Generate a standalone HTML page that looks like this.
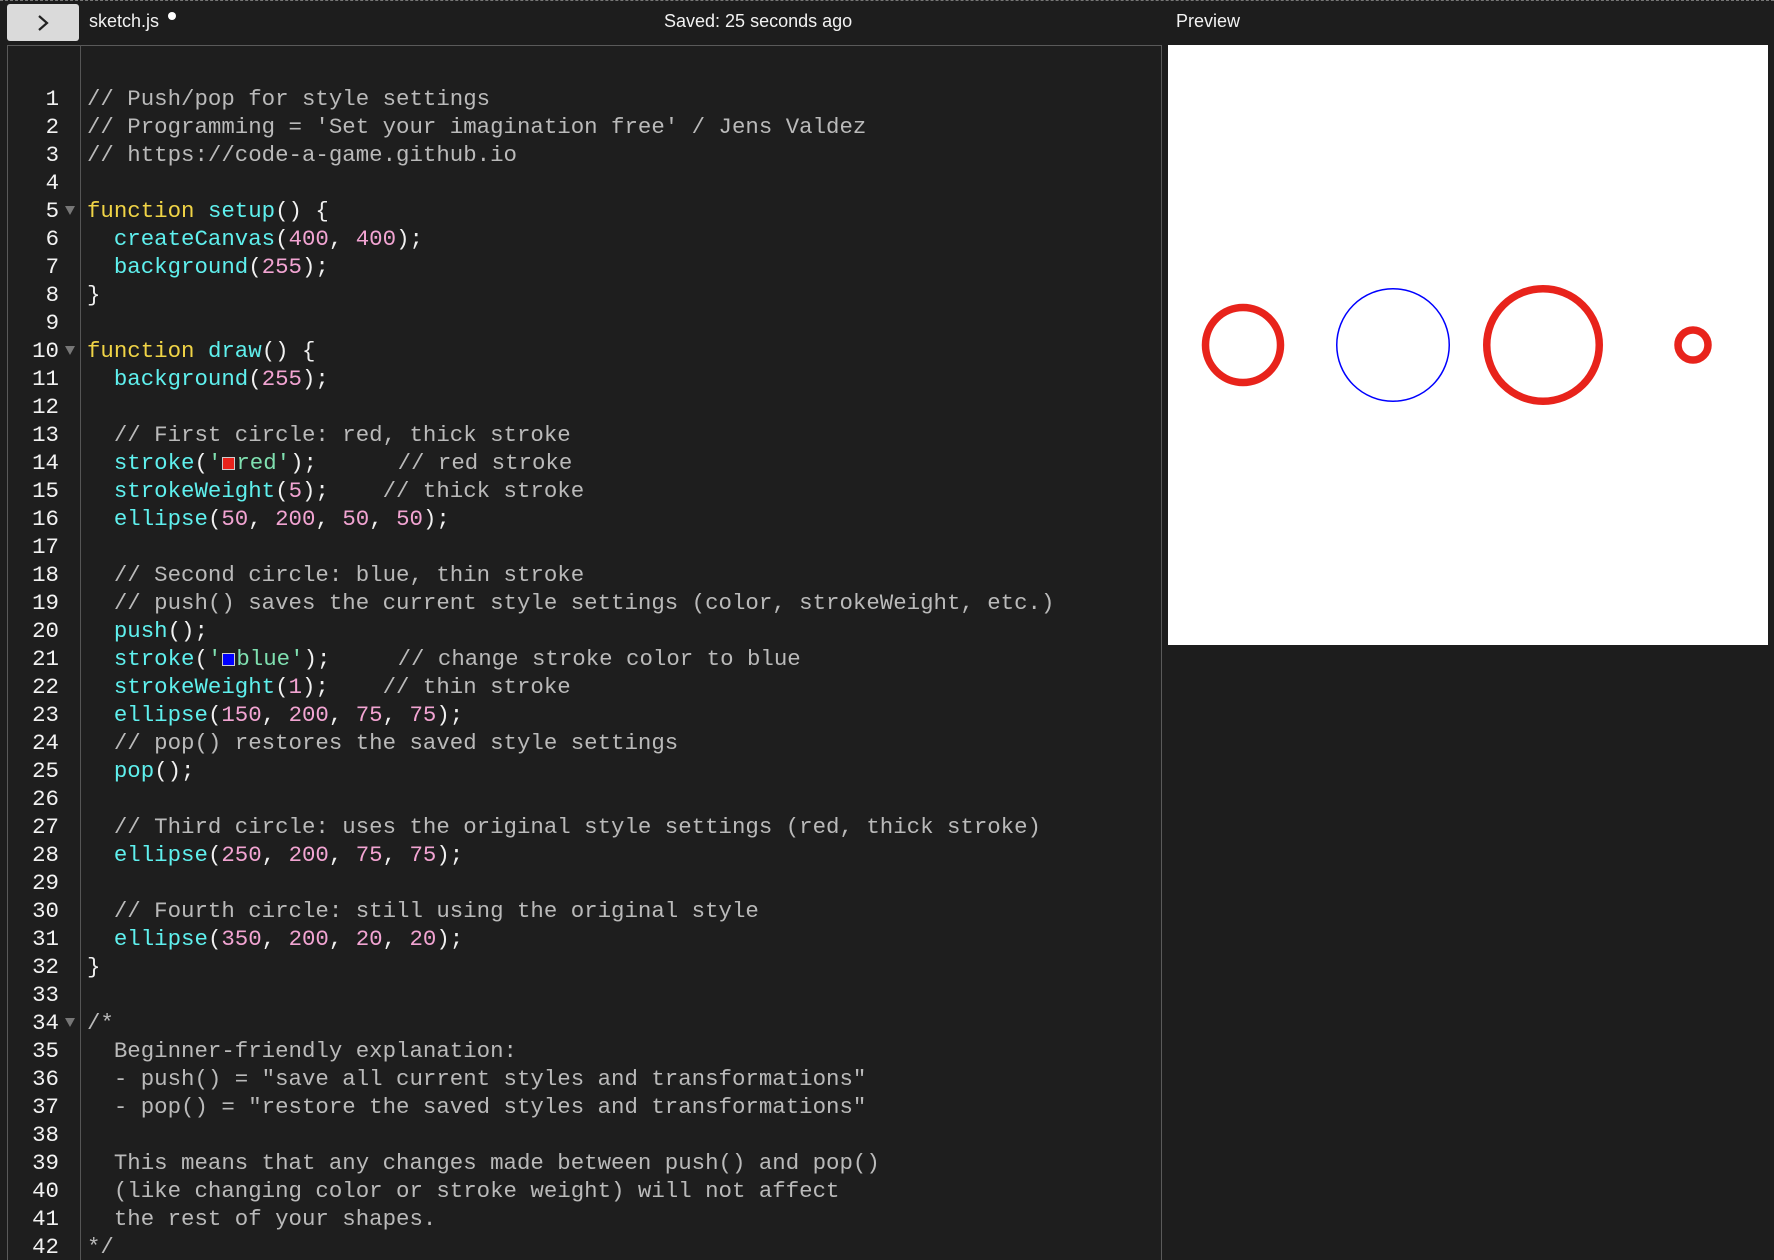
<!DOCTYPE html>
<html><head><meta charset="utf-8"><style>
*{margin:0;padding:0;box-sizing:border-box}
html,body{width:1774px;height:1260px;overflow:hidden}
body{background:#1d1d1d;position:relative;font-family:"Liberation Sans",sans-serif}
.topline{position:absolute;left:0;top:0;width:1774px;height:0;border-top:1px dashed #777}
.btn{position:absolute;left:7px;top:4px;width:72px;height:37px;background:#dadada;border-radius:3px}
.tab{position:absolute;left:89px;top:11px;color:#f2f2f2;font-size:18px}
.dot{position:absolute;left:168px;top:12px;width:8px;height:8px;border-radius:50%;background:#fff}
.saved{position:absolute;left:664px;top:11px;color:#f2f2f2;font-size:18px}
.prevl{position:absolute;left:1176px;top:11px;color:#f2f2f2;font-size:18px}
.editor{position:absolute;left:7px;top:45px;width:1155px;height:1230px;border:1px solid #5a5a5a;background:#1e1e1e}
.gut{position:absolute;left:80px;top:45px;width:1px;height:1220px;background:#555}
.code{position:absolute;left:0;top:85px;width:1160px;font-family:"Liberation Mono",monospace;font-size:22.4px;line-height:28px}
.l{height:28px;position:relative}
.n{position:absolute;left:9px;width:50px;text-align:right;color:#f2f2f2;white-space:pre}
.t{position:absolute;left:87px;color:#f0f0f0;white-space:pre}
.f{position:absolute;left:65px;top:9px;width:0;height:0;border-left:5px solid transparent;border-right:5px solid transparent;border-top:9px solid #777}
.k{color:#f0d446}.c{color:#5ff0ee}.m{color:#f2a4d2}.s{color:#7fe0b0}.g{color:#bababa}
.sw{display:inline-block;width:13px;height:13px;border:1px solid #ccc;vertical-align:-1px;margin:0 1px}
.preview{position:absolute;left:1168px;top:45px;width:600px;height:600px;background:#fff}
</style></head><body>
<div class="topline"></div>
<div class="btn"><svg width="72" height="37"><path d="M32 12 L40 19 L32 26" stroke="#222" stroke-width="2.2" fill="none"/></svg></div>
<div class="tab">sketch.js</div><div class="dot"></div>
<div class="saved">Saved: 25 seconds ago</div>
<div class="prevl">Preview</div>
<div class="editor"></div>
<div class="gut"></div>
<div class="code">
<div class="l"><span class="n">1</span><span class="t g">// Push/pop for style settings</span></div>
<div class="l"><span class="n">2</span><span class="t g">// Programming = 'Set your imagination free' / Jens Valdez</span></div>
<div class="l"><span class="n">3</span><span class="t g">// https://code-a-game.github.io</span></div>
<div class="l"><span class="n">4</span></div>
<div class="l"><span class="n">5</span><span class="f"></span><span class="t"><span class="k">function</span> <span class="c">setup</span>() {</span></div>
<div class="l"><span class="n">6</span><span class="t">  <span class="c">createCanvas</span>(<span class="m">400</span>, <span class="m">400</span>);</span></div>
<div class="l"><span class="n">7</span><span class="t">  <span class="c">background</span>(<span class="m">255</span>);</span></div>
<div class="l"><span class="n">8</span><span class="t">}</span></div>
<div class="l"><span class="n">9</span></div>
<div class="l"><span class="n">10</span><span class="f"></span><span class="t"><span class="k">function</span> <span class="c">draw</span>() {</span></div>
<div class="l"><span class="n">11</span><span class="t">  <span class="c">background</span>(<span class="m">255</span>);</span></div>
<div class="l"><span class="n">12</span></div>
<div class="l"><span class="n">13</span><span class="t g">  // First circle: red, thick stroke</span></div>
<div class="l"><span class="n">14</span><span class="t">  <span class="c">stroke</span>(<span class="s">'<span class="sw" style="background:#e8231b"></span>red'</span>);      <span class="g">// red stroke</span></span></div>
<div class="l"><span class="n">15</span><span class="t">  <span class="c">strokeWeight</span>(<span class="m">5</span>);    <span class="g">// thick stroke</span></span></div>
<div class="l"><span class="n">16</span><span class="t">  <span class="c">ellipse</span>(<span class="m">50</span>, <span class="m">200</span>, <span class="m">50</span>, <span class="m">50</span>);</span></div>
<div class="l"><span class="n">17</span></div>
<div class="l"><span class="n">18</span><span class="t g">  // Second circle: blue, thin stroke</span></div>
<div class="l"><span class="n">19</span><span class="t g">  // push() saves the current style settings (color, strokeWeight, etc.)</span></div>
<div class="l"><span class="n">20</span><span class="t">  <span class="c">push</span>();</span></div>
<div class="l"><span class="n">21</span><span class="t">  <span class="c">stroke</span>(<span class="s">'<span class="sw" style="background:#0000ff"></span>blue'</span>);     <span class="g">// change stroke color to blue</span></span></div>
<div class="l"><span class="n">22</span><span class="t">  <span class="c">strokeWeight</span>(<span class="m">1</span>);    <span class="g">// thin stroke</span></span></div>
<div class="l"><span class="n">23</span><span class="t">  <span class="c">ellipse</span>(<span class="m">150</span>, <span class="m">200</span>, <span class="m">75</span>, <span class="m">75</span>);</span></div>
<div class="l"><span class="n">24</span><span class="t g">  // pop() restores the saved style settings</span></div>
<div class="l"><span class="n">25</span><span class="t">  <span class="c">pop</span>();</span></div>
<div class="l"><span class="n">26</span></div>
<div class="l"><span class="n">27</span><span class="t g">  // Third circle: uses the original style settings (red, thick stroke)</span></div>
<div class="l"><span class="n">28</span><span class="t">  <span class="c">ellipse</span>(<span class="m">250</span>, <span class="m">200</span>, <span class="m">75</span>, <span class="m">75</span>);</span></div>
<div class="l"><span class="n">29</span></div>
<div class="l"><span class="n">30</span><span class="t g">  // Fourth circle: still using the original style</span></div>
<div class="l"><span class="n">31</span><span class="t">  <span class="c">ellipse</span>(<span class="m">350</span>, <span class="m">200</span>, <span class="m">20</span>, <span class="m">20</span>);</span></div>
<div class="l"><span class="n">32</span><span class="t">}</span></div>
<div class="l"><span class="n">33</span></div>
<div class="l"><span class="n">34</span><span class="f"></span><span class="t g">/*</span></div>
<div class="l"><span class="n">35</span><span class="t g">  Beginner-friendly explanation:</span></div>
<div class="l"><span class="n">36</span><span class="t g">  - push() = "save all current styles and transformations"</span></div>
<div class="l"><span class="n">37</span><span class="t g">  - pop() = "restore the saved styles and transformations"</span></div>
<div class="l"><span class="n">38</span></div>
<div class="l"><span class="n">39</span><span class="t g">  This means that any changes made between push() and pop()</span></div>
<div class="l"><span class="n">40</span><span class="t g">  (like changing color or stroke weight) will not affect</span></div>
<div class="l"><span class="n">41</span><span class="t g">  the rest of your shapes.</span></div>
<div class="l"><span class="n">42</span><span class="t g">*/</span></div>
</div>
<div class="preview"><svg width="600" height="600">
<circle cx="75" cy="300" r="37.5" fill="none" stroke="#e8231b" stroke-width="7.5"/>
<circle cx="225" cy="300" r="56.25" fill="none" stroke="#0000ff" stroke-width="1.5"/>
<circle cx="375" cy="300" r="56.25" fill="none" stroke="#e8231b" stroke-width="7.5"/>
<circle cx="525" cy="300" r="15" fill="none" stroke="#e8231b" stroke-width="7.5"/>
</svg></div>
</body></html>
